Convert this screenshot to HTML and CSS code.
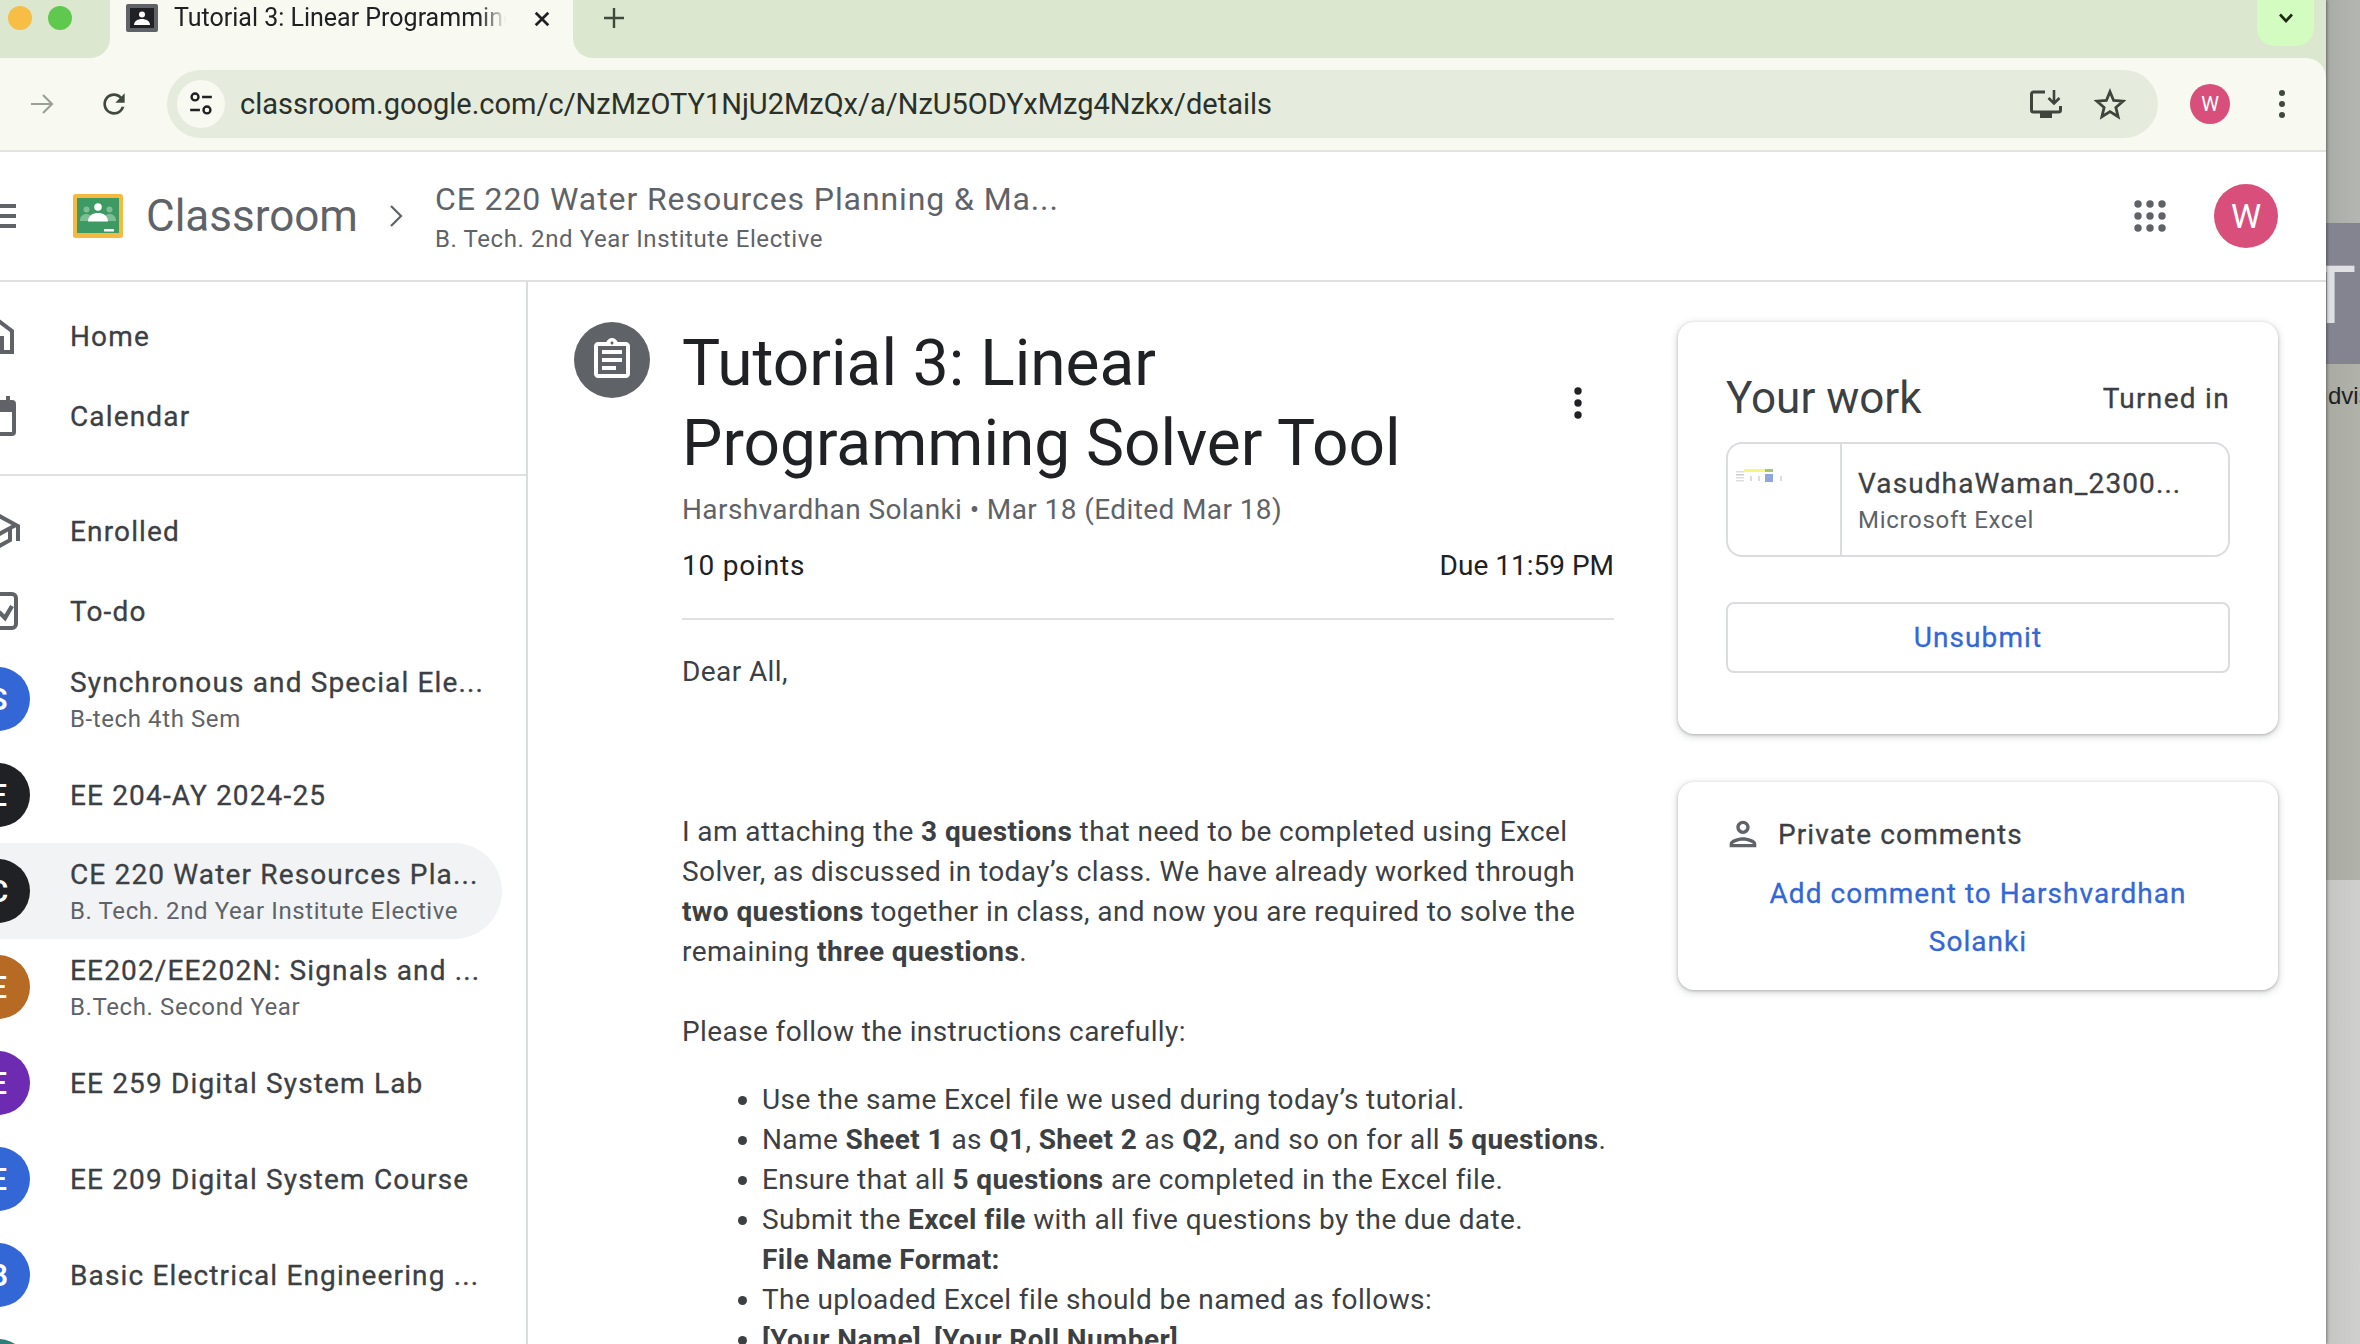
FILE: index.html
```html
<!DOCTYPE html>
<html lang="en">
<head>
    <meta charset="UTF-8">
    <meta name="viewport" content="width=device-width, initial-scale=1.0">
    <title>Tutorial 3: Linear Programming Solver Tool</title>
    <link rel="stylesheet" href="styles.css">
</head>
<body>
<div class="window">
    <!-- browser chrome -->
    <div class="tabstrip">
        <div class="strip-left">
            <span class="light light-yellow"></span>
            <span class="light light-green"></span>
        </div>
        <div class="tab">
            <svg class="tab-favicon" viewBox="0 0 32 28">
                <rect width="32" height="28" rx="2" fill="#5f6368"/>
                <rect x="4" y="4" width="24" height="20" fill="#202124"/>
                <circle cx="16" cy="10.5" r="3" fill="#fff"/>
                <path d="M8 21c0-4 4-6 8-6s8 2 8 6z" fill="#fff"/>
            </svg>
            <span class="tab-title">Tutorial 3: Linear Programming Solver Tool</span>
            <svg class="tab-close" viewBox="0 0 20 20"><path d="M3 3l14 14M17 3L3 17" stroke="#202124" stroke-width="3"/></svg>
        </div>
        <div class="strip-right">
            <svg class="new-tab" viewBox="0 0 20 20"><path d="M10 0v20M0 10h20" stroke="#3f4a3c" stroke-width="2.4"/></svg>
            <div class="tab-search">
                <svg viewBox="0 0 16 10"><path d="M2 1.5l6 6.5 6-6.5" fill="none" stroke="#1c2a14" stroke-width="2.6"/></svg>
            </div>
        </div>
    </div>

    <div class="toolbar">
        <svg class="tool-icon arrow" viewBox="0 0 24 24"><path d="M1 12h21M13 3l9 9-9 9" fill="none" stroke="#9ba196" stroke-width="2.2"/></svg>
        <svg class="tool-icon reload" viewBox="0 0 24 24"><path d="M17.65 6.35A7.958 7.958 0 0 0 12 4c-4.42 0-7.99 3.58-7.99 8s3.57 8 7.99 8c3.73 0 6.84-2.55 7.73-6h-2.08A5.99 5.99 0 0 1 12 18c-3.31 0-6-2.69-6-6s2.69-6 6-6c1.66 0 3.14.69 4.22 1.78L13 11h7V4l-2.35 2.35z" fill="#3f4a3c"/></svg>
        <div class="omnibox">
            <div class="site-info">
                <svg viewBox="0 0 24 24" fill="none" stroke="#202124" stroke-width="2.2">
                    <circle cx="6.5" cy="5.5" r="3.2"/><path d="M13 5.5h9M2 17.5h9"/><circle cx="17.5" cy="17.5" r="3.2"/>
                </svg>
            </div>
            <span class="url">classroom.google.com/c/NzMzOTY1NjU2MzQx/a/NzU5ODYxMzg4Nzkx/details</span>
            <svg class="omni-icon install" viewBox="0 0 32 28" fill="none" stroke="#3f443c" stroke-width="3">
                <path d="M15 2H3.500a2 2 0 0 0-2 2v16a2 2 0 0 0 2 2h25a2 2 0 0 0 2-2v-4"/>
                <path d="M24 0v13M18.500 8l5.500 5.500L29.500 8" stroke-width="2.6"/>
                <path d="M10 25.500h12" stroke-width="5"/>
            </svg>
            <svg class="omni-icon star" viewBox="0 0 30 30"><path d="M15 3.500l3.400 8.200 8.900.7-6.800 5.800 2.100 8.700L15 22.200l-7.600 4.700 2.100-8.700-6.800-5.800 8.900-.7z" fill="none" stroke="#3f443c" stroke-width="2.6"/></svg>
        </div>
        <div class="profile-small">W</div>
        <svg class="tool-kebab" viewBox="0 0 8 30"><circle cx="4" cy="4" r="3" fill="#3f4a3c"/><circle cx="4" cy="15" r="3" fill="#3f4a3c"/><circle cx="4" cy="26" r="3" fill="#3f4a3c"/></svg>
    </div>

    <!-- classroom header -->
    <header class="app-header">
        <svg class="menu-icon" viewBox="0 0 36 24"><path d="M0 2h36M0 12h36M0 22h36" stroke="#5f6368" stroke-width="4"/></svg>
        <svg class="logo" viewBox="0 0 50 44">
            <rect width="50" height="44" rx="3" fill="#f4b93e"/>
            <rect x="4" y="4" width="42" height="35" fill="#3d9a63"/>
            <circle cx="13.500" cy="15.500" r="3" fill="#7fbd95"/>
            <circle cx="36.500" cy="15.500" r="3" fill="#7fbd95"/>
            <path d="M7 27c0-5 3-7 6.500-7s6.500 2 6.500 7zM30 27c0-5 3-7 6.500-7s6.500 2 6.500 7z" fill="#7fbd95"/>
            <circle cx="25" cy="13" r="3.800" fill="#fff"/>
            <path d="M15 27.500c0-6 5-8.500 10-8.500s10 2.500 10 8.500z" fill="#fff"/>
            <rect x="31" y="35" width="10" height="2.500" fill="#fff"/>
        </svg>
        <span class="brand">Classroom</span>
        <svg class="crumb" viewBox="0 0 14 24"><path d="M2 2l10 10L2 22" fill="none" stroke="#5f6368" stroke-width="2.200"/></svg>
        <div class="course-title">
            <div class="course-name">CE 220 Water Resources Planning &amp; Ma...</div>
            <div class="course-sub">B. Tech. 2nd Year Institute Elective</div>
        </div>
        <svg class="apps" viewBox="0 0 32 32" fill="#5f6368">
            <circle cx="4" cy="4" r="3.700"/><circle cx="16" cy="4" r="3.700"/><circle cx="28" cy="4" r="3.700"/>
            <circle cx="4" cy="16" r="3.700"/><circle cx="16" cy="16" r="3.700"/><circle cx="28" cy="16" r="3.700"/>
            <circle cx="4" cy="28" r="3.700"/><circle cx="16" cy="28" r="3.700"/><circle cx="28" cy="28" r="3.700"/>
        </svg>
        <div class="profile">W</div>
    </header>

    <div class="page">
        <nav class="sidebar">
            <a class="nav-item">
                <span class="nav-icon"><svg viewBox="0 0 24 24"><path d="M12 5.500l6 4.500v9h-3v-7H9v7H6v-9l6-4.500M12 3L4 9v12h7v-7h2v7h7V9l-8-6z"/></svg></span>
                <span class="nav-label">Home</span>
            </a>
            <a class="nav-item">
                <span class="nav-icon"><svg viewBox="0 0 24 24"><path d="M19 4h-1V2h-2v2H8V2H6v2H5a2 2 0 0 0-2 2v14a2 2 0 0 0 2 2h14a2 2 0 0 0 2-2V6a2 2 0 0 0-2-2zm0 16H5V10h14v10z"/></svg></span>
                <span class="nav-label">Calendar</span>
            </a>
            <hr class="nav-divider">
            <a class="nav-item">
                <span class="nav-icon"><svg viewBox="0 0 24 24"><path d="M12 3L1 9l4 2.180v6L12 21l7-3.820v-6l2-1.090V17h2V9L12 3zm6.820 6L12 12.720 5.180 9 12 5.280 18.820 9zM17 15.990l-5 2.730-5-2.730v-3.720L12 15l5-2.730v3.720z"/></svg></span>
                <span class="nav-label">Enrolled</span>
            </a>
            <a class="nav-item">
                <span class="nav-icon"><svg viewBox="0 0 24 24"><rect x="4" y="3.500" width="17" height="17" rx="2" fill="none" stroke="#5f6368" stroke-width="2"/><path d="M12.500 12.500l3 3 3.500-6" fill="none" stroke="#5f6368" stroke-width="2.200"/></svg></span>
                <span class="nav-label">To-do</span>
            </a>
            <a class="class-item">
                <span class="avatar avatar-blue">S</span>
                <span class="class-text"><span class="nav-label">Synchronous and Special Ele...</span><span class="class-sub">B-tech 4th Sem</span></span>
            </a>
            <a class="class-item">
                <span class="avatar avatar-black">E</span>
                <span class="class-text"><span class="nav-label">EE 204-AY 2024-25</span></span>
            </a>
            <a class="class-item selected">
                <span class="avatar avatar-black">C</span>
                <span class="class-text"><span class="nav-label">CE 220 Water Resources Pla...</span><span class="class-sub">B. Tech. 2nd Year Institute Elective</span></span>
            </a>
            <a class="class-item">
                <span class="avatar avatar-orange">E</span>
                <span class="class-text"><span class="nav-label">EE202/EE202N: Signals and ...</span><span class="class-sub">B.Tech. Second Year</span></span>
            </a>
            <a class="class-item">
                <span class="avatar avatar-purple">E</span>
                <span class="class-text"><span class="nav-label">EE 259 Digital System Lab</span></span>
            </a>
            <a class="class-item">
                <span class="avatar avatar-blue">E</span>
                <span class="class-text"><span class="nav-label">EE 209 Digital System Course</span></span>
            </a>
            <a class="class-item">
                <span class="avatar avatar-blue">B</span>
                <span class="class-text"><span class="nav-label">Basic Electrical Engineering ...</span></span>
            </a>
            <a class="class-item">
                <span class="avatar avatar-teal">M</span>
            </a>
        </nav>

        <main class="content">
            <section class="assignment">
                <div class="assignment-icon">
                    <svg viewBox="0 0 24 24"><path fill-rule="evenodd" d="M19 3h-4.180C14.400 1.840 13.300 1 12 1s-2.400.84-2.820 2H5c-1.100 0-2 .9-2 2v14c0 1.100.9 2 2 2h14c1.100 0 2-.9 2-2V5c0-1.100-.9-2-2-2zm-7-.25c.41 0 .75.34.75.75s-.34.75-.75.75-.75-.34-.75-.75.34-.75.75-.75zM19 19H5V5h14v14zM7 7h10v2H7zm0 4h10v2H7zm0 4h7v2H7z"/></svg>
                </div>
                <div class="assignment-body">
                    <div class="title-row">
                        <h1>Tutorial 3: Linear Programming Solver Tool</h1>
                        <svg class="kebab" viewBox="0 0 8 32"><circle cx="4" cy="4" r="3.700"/><circle cx="4" cy="16" r="3.700"/><circle cx="4" cy="28" r="3.700"/></svg>
                    </div>
                    <div class="byline">Harshvardhan Solanki • Mar 18 (Edited Mar 18)</div>
                    <div class="points-row">
                        <span class="points">10 points</span>
                        <span>Due 11:59 PM</span>
                    </div>
                    <div class="description">
                        <p class="greeting">Dear All,</p>
                        <p>I am attaching the <b>3 questions</b> that need to be completed using Excel Solver, as discussed in today’s class. We have already worked through <b>two questions</b> together in class, and now you are required to solve the remaining <b>three questions</b>.</p>
                        <p class="lead">Please follow the instructions carefully:</p>
                        <ul>
                            <li>Use the same Excel file we used during today’s tutorial.</li>
                            <li>Name <b>Sheet 1</b> as <b>Q1</b>, <b>Sheet 2</b> as <b>Q2,</b> and so on for all <b>5 questions</b>.</li>
                            <li>Ensure that all <b>5 questions</b> are completed in the Excel file.</li>
                            <li>Submit the <b>Excel file</b> with all five questions by the due date.<br><b>File Name Format:</b></li>
                            <li>The uploaded Excel file should be named as follows:</li>
                            <li><b>[Your Name]_[Your Roll Number]</b></li>
                        </ul>
                    </div>
                </div>
            </section>

            <aside class="side-cards">
                <div class="card work-card">
                    <div class="work-head">
                        <span class="work-title">Your work</span>
                        <span class="work-status">Turned in</span>
                    </div>
                    <div class="file-box">
                        <div class="file-thumb">
                            <svg viewBox="0 0 112 40">
                                <rect x="8" y="9" width="8" height="1.500" fill="#ddd"/>
                                <rect x="8" y="12" width="8" height="1.500" fill="#ccc"/>
                                <rect x="8" y="15" width="8" height="1.500" fill="#ddd"/>
                                <rect x="8" y="18" width="8" height="1.500" fill="#ddd"/>
                                <rect x="16" y="7" width="21" height="3" fill="#f7f77c"/>
                                <rect x="37" y="7" width="8" height="3" fill="#a5c76a"/>
                                <rect x="37" y="12" width="8" height="8" fill="#8ea6d9"/>
                                <rect x="22" y="14" width="2" height="5" fill="#ddd"/>
                                <rect x="30" y="14" width="2" height="5" fill="#ddd"/>
                                <rect x="52" y="14" width="2" height="5" fill="#ddd"/>
                            </svg>
                        </div>
                        <div class="file-info">
                            <div class="file-name">VasudhaWaman_2300...</div>
                            <div class="file-type">Microsoft Excel</div>
                        </div>
                    </div>
                    <button class="unsubmit">Unsubmit</button>
                </div>

                <div class="card comments-card">
                    <div class="comments-head">
                        <svg viewBox="0 0 24 24"><path d="M12 6c1.100 0 2 .9 2 2s-.9 2-2 2-2-.9-2-2 .9-2 2-2m0 10c2.700 0 5.800 1.290 6 2H6c.23-.72 3.310-2 6-2m0-12C9.790 4 8 5.790 8 8s1.790 4 4 4 4-1.790 4-4-1.790-4-4-4zm0 10c-2.670 0-8 1.340-8 4v2h16v-2c0-2.660-5.330-4-8-4z"/></svg>
                        <span>Private comments</span>
                    </div>
                    <div class="comment-link">Add comment to Harshvardhan Solanki</div>
                </div>
            </aside>
        </main>
    </div>
</div>

<!-- other window showing behind the browser -->
<div class="backdrop">
    <div class="bd-top"></div>
    <div class="bd-banner"><span class="bd-letter">T</span></div>
    <div class="bd-panel"><span class="bd-text">dvisor</span></div>
    <div class="bd-bottom"></div>
</div>
</body>
</html>
```

FILE: styles.css
```css
* {
    box-sizing: border-box;
}

html, body {
    height: 1344px;
    overflow: hidden;
}

body {
    margin: 0;
    display: flex;
    font-family: Roboto, "Liberation Sans", sans-serif;
    background-color: #b5b6ad;
}

.window {
    width: 2326px;
    height: 1344px;
    overflow: hidden;
    flex-shrink: 0;
    background-color: #dbe7cf;
    box-shadow: 1px 0 3px rgba(0, 0, 0, 0.4);
    position: relative;
}

/* tab strip */
.tabstrip {
    display: flex;
    height: 58px;
    background-color: #f8f9f1;
}

.strip-left {
    width: 110px;
    background-color: #dbe7cf;
    border-bottom-right-radius: 20px;
    display: flex;
    gap: 16px;
    padding: 6px 0 0 8px;
}

.light {
    width: 24px;
    height: 24px;
    border-radius: 50%;
}

.light-yellow {
    background-color: #f7bd45;
}

.light-green {
    background-color: #5fc84f;
}

.tab {
    width: 463px;
    display: flex;
    align-items: flex-start;
    padding: 4px 0 0 16px;
    background-color: #f8f9f1;
}

.tab-favicon {
    width: 32px;
    height: 28px;
    flex-shrink: 0;
}

.tab-title {
    width: 332px;
    margin-left: 16px;
    font-size: 25px;
    line-height: 28px;
    color: #202124;
    white-space: nowrap;
    overflow: hidden;
    -webkit-mask-image: linear-gradient(to right, #000 92%, transparent);
    mask-image: linear-gradient(to right, #000 92%, transparent);
}

.tab-close {
    width: 18px;
    height: 18px;
    margin: 6px 0 0 27px;
}

.strip-right {
    flex: 1;
    background-color: #dbe7cf;
    border-bottom-left-radius: 20px;
    display: flex;
    justify-content: space-between;
    padding: 0 12px 0 31px;
}

.new-tab {
    width: 20px;
    height: 20px;
    margin-top: 8px;
}

.tab-search {
    width: 57px;
    height: 46px;
    background-color: #d3fcc0;
    border-radius: 0 0 18px 18px;
    display: flex;
    justify-content: center;
    padding-top: 13px;
}

.tab-search svg {
    width: 16px;
    height: 10px;
}

/* toolbar */
.toolbar {
    display: flex;
    align-items: center;
    height: 94px;
    padding-left: 30px;
    background-color: #f8f9f1;
    border-bottom: 2px solid #e3e5dc;
    border-top-right-radius: 20px;
}

.tool-icon {
    width: 24px;
    height: 24px;
    flex-shrink: 0;
}

.reload {
    width: 32px;
    height: 32px;
    margin-left: 44px;
}

.omnibox {
    width: 1991px;
    height: 68px;
    margin-left: 37px;
    display: flex;
    align-items: center;
    flex-shrink: 0;
    padding-left: 10px;
    background-color: #e5ebdd;
    border-radius: 34px;
}

.site-info {
    width: 48px;
    height: 48px;
    border-radius: 50%;
    background-color: #f8f9f1;
    display: flex;
    align-items: center;
    justify-content: center;
    flex-shrink: 0;
}

.site-info svg {
    width: 26px;
    height: 26px;
}

.url {
    flex: 1;
    margin-left: 15px;
    font-size: 29px;
    color: #2b3029;
    white-space: nowrap;
}

.omni-icon {
    flex-shrink: 0;
}

.install {
    width: 32px;
    height: 28px;
}

.star {
    width: 32px;
    height: 32px;
    margin: 0 32px 0 32px;
}

.profile-small {
    width: 40px;
    height: 40px;
    margin-left: 32px;
    border-radius: 50%;
    background-color: #d94f7b;
    color: #fff;
    font-size: 20px;
    display: flex;
    align-items: center;
    justify-content: center;
    flex-shrink: 0;
}

.tool-kebab {
    width: 8px;
    height: 30px;
    margin-left: 48px;
    flex-shrink: 0;
}

/* classroom header */
.app-header {
    display: flex;
    align-items: center;
    height: 130px;
    background-color: #fff;
    border-bottom: 2px solid #e0e0e0;
}

.menu-icon {
    width: 36px;
    height: 24px;
    margin-left: -20px;
    flex-shrink: 0;
}

.logo {
    width: 50px;
    height: 44px;
    margin-left: 57px;
    flex-shrink: 0;
}

.brand {
    margin-left: 23px;
    font-size: 44px;
    color: #5f6368;
}

.crumb {
    width: 14px;
    height: 24px;
    margin-left: 31px;
}

.course-title {
    margin-left: 32px;
    padding-top: 2px;
    flex: 1;
}

.course-name {
    font-size: 32px;
    line-height: 40px;
    letter-spacing: 0.9px;
    color: #5f6368;
}

.course-sub {
    font-size: 24px;
    line-height: 32px;
    color: #5f6368;
    margin-top: 4px;
    letter-spacing: 0.6px;
}

.apps {
    width: 32px;
    height: 32px;
}

.profile {
    width: 64px;
    height: 64px;
    margin: 0 48px;
    border-radius: 50%;
    background-color: #d94f7b;
    color: #fff;
    font-size: 34px;
    display: flex;
    align-items: center;
    justify-content: center;
}

/* layout below the header */
.page {
    display: flex;
    background-color: #fff;
    height: 1062px;
}

.sidebar {
    width: 528px;
    flex-shrink: 0;
    padding-top: 14px;
    border-right: 2px solid #dadce0;
}

.nav-item {
    display: flex;
    align-items: center;
    height: 80px;
}

.nav-icon {
    width: 64px;
    margin: 0 40px 0 -34px;
    display: flex;
    justify-content: center;
    flex-shrink: 0;
}

.nav-icon svg {
    width: 48px;
    height: 48px;
    fill: #5f6368;
}

.nav-label {
    display: block;
    padding-top: 2px;
    font-size: 28px;
    line-height: 36px;
    letter-spacing: 1.15px;
    color: #3c4043;
    -webkit-text-stroke: 0.3px #3c4043;
    white-space: nowrap;
}

.nav-divider {
    margin: 18px 0 15px;
    border: 0;
    border-top: 2px solid #e0e0e0;
}

.class-item {
    display: flex;
    align-items: center;
    width: 502px;
    height: 96px;
    border-radius: 0 48px 48px 0;
}

.class-item.selected {
    background-color: #f1f3f4;
}

.avatar {
    width: 64px;
    height: 64px;
    margin: 0 40px 0 -34px;
    border-radius: 50%;
    color: #fff;
    font-size: 32px;
    font-weight: 500;
    display: flex;
    align-items: center;
    justify-content: center;
    flex-shrink: 0;
}

.avatar-blue {
    background-color: #3367d6;
}

.avatar-black {
    background-color: #202124;
}

.avatar-orange {
    background-color: #b76a24;
}

.avatar-purple {
    background-color: #6c2bb0;
}

.avatar-teal {
    background-color: #2e7d78;
}

.class-sub {
    display: block;
    font-size: 24px;
    line-height: 32px;
    letter-spacing: 0.6px;
    color: #5f6368;
    margin-top: 2px;
    white-space: nowrap;
}

/* assignment column */
.content {
    flex: 1;
    display: flex;
    padding-top: 40px;
}

.assignment {
    width: 1086px;
    display: flex;
    padding-left: 46px;
}

.assignment-icon {
    width: 76px;
    height: 76px;
    border-radius: 50%;
    background-color: #5f6368;
    display: flex;
    align-items: center;
    justify-content: center;
    flex-shrink: 0;
}

.assignment-icon svg {
    width: 48px;
    height: 48px;
    fill: #fff;
}

.assignment-body {
    width: 932px;
    margin-left: 32px;
}

.title-row {
    display: flex;
    align-items: center;
    justify-content: space-between;
    padding-right: 32px;
}

h1 {
    width: 760px;
    margin: 0;
    padding-top: 2px;
    font-size: 64px;
    line-height: 80px;
    font-weight: 400;
    color: #202124;
}

.kebab {
    width: 8px;
    height: 32px;
    fill: #202124;
}

.byline {
    margin-top: 6px;
    font-size: 28px;
    line-height: 40px;
    letter-spacing: 0.4px;
    color: #5f6368;
}

.points-row {
    display: flex;
    justify-content: space-between;
    margin-top: 16px;
    padding-bottom: 32px;
    border-bottom: 2px solid #e0e0e0;
    font-size: 28px;
    line-height: 40px;
    color: #202124;
}

.points {
    letter-spacing: 0.8px;
}

.description {
    margin-top: 32px;
    font-size: 28px;
    line-height: 40px;
    letter-spacing: 0.4px;
    color: #3c4043;
}

.description p {
    margin: 0 0 40px;
}

.description .greeting {
    margin-bottom: 120px;
}

.description .lead {
    margin-bottom: 28px;
}

.description ul {
    margin: 0;
    padding-left: 80px;
}

/* right cards */
.side-cards {
    width: 600px;
    margin-left: 64px;
    display: flex;
    flex-direction: column;
    gap: 48px;
}

.card {
    background-color: #fff;
    border-radius: 16px;
    box-shadow: 0 1px 3px rgba(60, 64, 67, 0.3), 0 2px 6px 2px rgba(60, 64, 67, 0.15);
}

.work-card {
    height: 412px;
    padding: 44px 48px 0;
}

.work-head {
    display: flex;
    align-items: center;
    justify-content: space-between;
    height: 64px;
}

.work-title {
    font-size: 44px;
    color: #3c4043;
}

.work-status {
    font-size: 28px;
    letter-spacing: 1.3px;
    color: #3c4043;
    -webkit-text-stroke: 0.3px #3c4043;
}

.file-box {
    display: flex;
    height: 115px;
    margin-top: 12px;
    border: 2px solid #dadce0;
    border-radius: 16px;
}

.file-thumb {
    width: 114px;
    padding-top: 18px;
    border-right: 2px solid #dadce0;
}

.file-thumb svg {
    display: block;
    width: 112px;
    height: 40px;
}

.file-info {
    padding: 22px 0 0 16px;
}

.file-name {
    font-size: 28px;
    line-height: 36px;
    letter-spacing: 1.1px;
    color: #3c4043;
    -webkit-text-stroke: 0.3px #3c4043;
}

.file-type {
    margin-top: 2px;
    font-size: 24px;
    line-height: 32px;
    letter-spacing: 0.7px;
    color: #5f6368;
}

.unsubmit {
    display: block;
    width: 100%;
    height: 71px;
    margin-top: 45px;
    border: 2px solid #dadce0;
    border-radius: 8px;
    background-color: #fff;
    font-family: inherit;
    font-size: 28px;
    letter-spacing: 1.1px;
    color: #3367d6;
    -webkit-text-stroke: 0.3px #3367d6;
}

.comments-card {
    height: 208px;
    padding: 32px 48px 0;
}

.comments-head {
    display: flex;
    align-items: center;
    height: 40px;
    margin-left: -3px;
    gap: 15px;
    font-size: 28px;
    letter-spacing: 1.1px;
    color: #3c4043;
    -webkit-text-stroke: 0.3px #3c4043;
}

.comments-head svg {
    width: 40px;
    height: 40px;
    fill: #5f6368;
    -webkit-text-stroke: 0;
}

.comment-link {
    width: 440px;
    margin: 16px auto 0;
    text-align: center;
    font-size: 28px;
    line-height: 48px;
    letter-spacing: 1.03px;
    color: #3367d6;
    -webkit-text-stroke: 0.3px #3367d6;
}

/* window behind */
.backdrop {
    flex: 1;
    display: flex;
    flex-direction: column;
}

.bd-top {
    height: 223px;
    background: linear-gradient(to right, #a9aba7, #bfc1ba);
}

.bd-banner {
    height: 141px;
    padding-top: 16px;
    background-color: #83848f;
    overflow: hidden;
}

.bd-letter {
    display: block;
    margin-left: -21px;
    font-family: "Liberation Sans", sans-serif;
    font-size: 84px;
    line-height: 110px;
    color: #e0e0e4;
}

.bd-panel {
    height: 516px;
    background: linear-gradient(to right, #a9aaa2, #b8b9b0);
    overflow: hidden;
}

.bd-text {
    display: block;
    padding: 2px 0 0 2px;
    font-family: "Liberation Sans", sans-serif;
    font-size: 24px;
    line-height: 60px;
    color: #202124;
}

.bd-bottom {
    flex: 1;
    background: linear-gradient(to right, #c4c5c3, #dcdcda);
}
```
